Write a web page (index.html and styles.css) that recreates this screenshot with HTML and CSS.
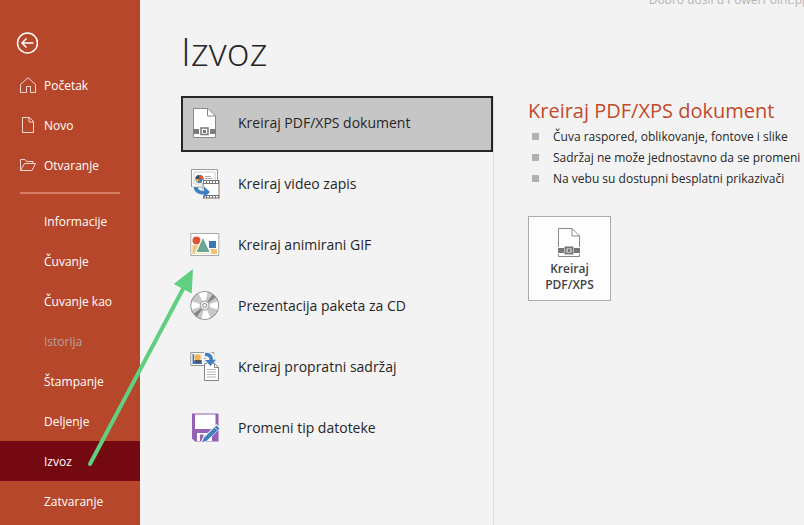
FILE: index.html
```html
<!DOCTYPE html>
<html lang="sr-Latn">
<head>
  <meta charset="UTF-8">
  <meta name="viewport" content="width=device-width, initial-scale=1">
  <title>Izvoz</title>
  <link rel="stylesheet" href="styles.css">
</head>
<body>
  <!-- Leva navigacija -->
  <nav class="sidebar">
    <button type="button" class="back" aria-label="Nazad">
      <svg width="22" height="22" viewBox="0 0 22 22">
        <circle cx="11.500" cy="11" r="10"/>
        <path d="M17.500 11H6M10.500 6.500L6 11l4.500 4.500"/>
      </svg>
    </button>
    <a href="#" class="nav-item">
      <svg class="nav-icon" width="16" height="16" viewBox="0 0 16 16">
        <path d="M.5 7.500L8 .7l7.500 6.800V15.500h-5V9.500h-4v6h-6z"/>
      </svg>
      Početak
    </a>
    <a href="#" class="nav-item">
      <svg class="nav-icon" width="16" height="16" viewBox="0 0 16 16">
        <path d="M2.500.5h7l4 4v11h-11zM9 .5V5h4.500"/>
      </svg>
      Novo
    </a>
    <a href="#" class="nav-item">
      <svg class="nav-icon" width="16" height="16" viewBox="0 0 16 16">
        <path d="M.5 13.500v-11h4.500l1.500 2h6.500v2M.5 13.500L4.500 6.500h11l-3.500 7z"/>
      </svg>
      Otvaranje
    </a>
    <hr class="divider">
    <a href="#" class="nav-item sub">Informacije</a>
    <a href="#" class="nav-item sub">Čuvanje</a>
    <a href="#" class="nav-item sub">Čuvanje kao</a>
    <a href="#" class="nav-item sub disabled" aria-disabled="true">Istorija</a>
    <a href="#" class="nav-item sub">Štampanje</a>
    <a href="#" class="nav-item sub">Deljenje</a>
    <a href="#" class="nav-item sub active" aria-current="page">Izvoz</a>
    <a href="#" class="nav-item sub">Zatvaranje</a>
  </nav>

  <main class="content">
    <div class="file-name">Dobro došli u PowerPoint.pptx</div>
    <h1>Izvoz</h1>

    <div class="columns">
      <!-- Lista opcija za izvoz -->
      <div class="options">
        <button type="button" class="option selected">
          <svg class="option-icon" width="30" height="30" viewBox="0 0 30 30">
            <path d="M3.500.5H18L25.500 8v21.500h-22z" fill="#fff" stroke="#888"/>
            <path d="M17.500.5V8h8" fill="none" stroke="#888"/>
            <path d="M3 21h23v5H3z" fill="#7d7d7d"/>
            <path d="M9 18.500h11v9H9z" fill="#fff"/>
            <path d="M11 20h7v6.500h-7z" fill="#fff" stroke="#777" stroke-width="1.500"/>
            <path d="M13 22h3v3h-3z" fill="#777"/>
          </svg>
          <span class="label">Kreiraj PDF/XPS dokument</span>
        </button>
        <button type="button" class="option">
          <svg class="option-icon" width="30" height="30" viewBox="0 0 30 30">
            <path d="M1.500.5h26V18h-26z" fill="#fff" stroke="#999"/>
            <path d="M4 3h21v12H4z" fill="none" stroke="#ccc"/>
            <circle cx="9.500" cy="10" r="4" fill="#3b7dc0"/>
            <path d="M9.500 10V6a4 4 0 0 0-4 4z" fill="#3d4d60"/>
            <path d="M9.500 10V6a4 4 0 0 1 4 4z" fill="#e2552e"/>
            <path d="M9.500 10H5.500a4 4 0 0 0 2 3.500z" fill="#edad42"/>
            <path d="M15 7.500h6M15 9.500h7" stroke="#aaa"/>
            <path d="M12 11h17.500v18H12z" fill="#fff"/>
            <path d="M13 11.500h16.500M13 14.500h16M13 26.500h16M13 29h16.500M29 11v18" stroke="#777" fill="none"/>
            <path d="M13 13h16M13 27.800h16" stroke="#777" stroke-width="3" stroke-dasharray="1 2"/>
            <path d="M13 14v10" stroke="#777"/>
            <path d="M4 17.500c1 5 5 6.500 11 6" fill="none" stroke="#f3f3f3" stroke-width="6"/>
            <path d="M3.500 18H7.500c1 3 3 4 6.500 4V17.500l6 5.500-6 5.500V25.500c-6 0-9.500-2-10.500-7.500z" fill="#3f80bf"/>
          </svg>
          <span class="label">Kreiraj video zapis</span>
        </button>
        <button type="button" class="option">
          <svg class="option-icon" width="30" height="30" viewBox="0 0 30 30">
            <path d="M.8 3.500h28v22H.8z" fill="#fff" stroke="#aaa"/>
            <path d="M2.500 15h24.500v9H2.500z" fill="#eec477"/>
            <circle cx="6.500" cy="10.500" r="5" fill="#fff"/>
            <circle cx="6.500" cy="10.500" r="4" fill="#dc5535"/>
            <path d="M18 10h9v9h-9z" fill="#fff"/>
            <path d="M19 11h7v7h-7z" fill="#3877b8"/>
            <path d="M13 5.500L22 23.500H4.500z" fill="#fff"/>
            <path d="M13 8l6.500 14h-13z" fill="#6ca795"/>
          </svg>
          <span class="label">Kreiraj animirani GIF</span>
        </button>
        <button type="button" class="option">
          <svg class="option-icon" width="30" height="30" viewBox="0 0 30 30">
            <circle cx="14.700" cy="14.500" r="14" fill="#c8c8c8" stroke="#8b8b8b"/>
            <path d="M14.700 14.500L8.500 2.500a13.500 13.500 0 0 1 9-1.200z" fill="#fff"/>
            <path d="M14.700 14.500L2 10.500a13.500 13.500 0 0 0 0 8z" fill="#fff"/>
            <path d="M14.700 14.500L27.500 10.500a13.500 13.500 0 0 1 0 8z" fill="#fff"/>
            <path d="M14.700 14.500L20.500 26.500a13.500 13.500 0 0 1-9 1.200z" fill="#fff"/>
            <path d="M14.700 14.500L22.500 3.500l3 3z" fill="#858585"/>
            <path d="M14.700 14.500L7 25.500l-3-3z" fill="#858585"/>
            <circle cx="14.700" cy="14.500" r="4.500" fill="#eee" stroke="#999"/>
            <circle cx="14.700" cy="14.500" r="2" fill="#fff" stroke="#888"/>
          </svg>
          <span class="label">Prezentacija paketa za CD</span>
        </button>
        <button type="button" class="option">
          <svg class="option-icon" width="30" height="30" viewBox="0 0 30 30">
            <path d="M.8.5h23v13H.8z" fill="#fff" stroke="#999"/>
            <path d="M2.500 2h9.500v10H2.500z" fill="#3978b8"/>
            <path d="M4 2h8v7H4z" fill="#f4e3c4"/>
            <circle cx="7.500" cy="5.500" r="3" fill="#eeb25b"/>
            <path d="M4 8h8l-4 4z" fill="#555"/>
            <path d="M13.500 4h2M13.500 6.500h3M13.500 9h3" stroke="#aaa"/>
            <path d="M14.500 11.500h10l4 4v13h-14z" fill="#fff" stroke="#858585"/>
            <path d="M24.500 11.500v4h4" fill="none" stroke="#858585"/>
            <path d="M17 17.500h9M17 20h9M17 22.500h9M17 25h9" stroke="#b5b5b5"/>
            <path d="M14 0h5c4 0 6 3 6 7h1.500l-6 8.500L14 8h4c0-3-1-4-4-4z" fill="#f3f3f3"/>
            <path d="M15 .8c5-.8 8 2.500 8 7h3L20.500 14l-5.500-6H19.500c0-2.500-1.500-4-4.500-4z" fill="#3f80bf"/>
          </svg>
          <span class="label">Kreiraj propratni sadržaj</span>
        </button>
        <button type="button" class="option">
          <svg class="option-icon" width="30" height="30" viewBox="0 0 30 30">
            <path d="M2 .5h26.500v28H5l-3-3z" fill="#9561b5"/>
            <path d="M5 1.500h20.500v14.500H5z" fill="#fff"/>
            <path d="M7 20h15v8H7z" fill="#fff"/>
            <path d="M10 21.500h3.500V28H10z" fill="#9561b5"/>
            <path d="M26.500 11l4 4L17 28.500l-7 2.500 2.500-6z" fill="#f3f3f3"/>
            <path d="M26.500 12.500l3 3L17 27.500l-5 1.800 2-4.500z" fill="#3f7fbc"/>
            <path d="M24.500 14.500l3 3" stroke="#c4d9ec"/>
          </svg>
          <span class="label">Promeni tip datoteke</span>
        </button>
      </div>

      <!-- Detalji izabrane opcije -->
      <section class="details">
        <h2>Kreiraj PDF/XPS dokument</h2>
        <ul>
          <li>Čuva raspored, oblikovanje, fontove i slike</li>
          <li>Sadržaj ne može jednostavno da se promeni</li>
          <li>Na vebu su dostupni besplatni prikazivači</li>
        </ul>
        <button type="button" class="tile">
          <svg width="30" height="30" viewBox="0 0 30 30">
            <path d="M3.500.5H17L24.500 8v20.500h-21z" fill="#fff" stroke="#888"/>
            <path d="M17 .5V8h7.500" fill="none" stroke="#888"/>
            <path d="M2 19h24v7H2z" fill="#fdfdfd"/>
            <path d="M3 20h22v5H3z" fill="#777"/>
            <path d="M9 18h10v9H9z" fill="#fff"/>
            <path d="M10.500 19.500h7v6h-7z" fill="#fff" stroke="#777" stroke-width="2"/>
            <path d="M12.500 21h3v3h-3z" fill="#777"/>
          </svg>
          <span>Kreiraj<br>PDF/XPS</span>
        </button>
      </section>
    </div>
  </main>

  <!-- Strelica preko sadržaja -->
  <svg class="arrow" width="804" height="525" viewBox="0 0 804 525" aria-hidden="true">
    <path d="M90 464L183.500 288" stroke="#61cf82" stroke-width="4" stroke-linecap="round"/>
    <path d="M193 269l-1.300 24.500-18-9.500z" fill="#61cf82"/>
  </svg>
</body>
</html>
```
FILE: styles.css
```css
* {
  box-sizing: border-box;
  margin: 0;
  padding: 0;
}

body {
  position: relative;
  display: flex;
  min-height: 100vh;
  overflow: hidden;
  background-color: #f3f3f3;
  color: #262626;
  font-family: "Open Sans", "Noto Sans", sans-serif;
  font-size: 12px;
}

button {
  font: inherit;
  color: inherit;
  cursor: pointer;
}

/* Leva navigacija */
.sidebar {
  flex: 0 0 140px;
  background-color: #b7472a;
}

.back {
  display: block;
  height: 65px;
  padding: 0 16px;
  padding-top: 20px;
  border: none;
  background: none;
}

.back svg {
  display: block;
  fill: none;
  stroke: #fff;
  stroke-width: 1.5;
}

.nav-item {
  display: flex;
  align-items: center;
  gap: 8px;
  height: 40px;
  padding-left: 20px;
  color: #fff;
  text-decoration: none;
}

.nav-item.sub {
  padding-left: 44px;
}

.nav-item:hover {
  background-color: #a33b20;
}

.nav-item.active {
  background-color: #740912;
}

.nav-item.disabled {
  color: #b5a19b;
}

.nav-icon {
  fill: none;
  stroke: #f3d9d2;
}

.divider {
  height: 2px;
  margin: 7px 20px;
  border: none;
  background-color: #d67d66;
}

/* Glavni sadržaj */
.content {
  flex: 1;
  min-width: 0;
  padding-left: 41px;
}

.file-name {
  height: 24px;
  margin-top: -8px;
  margin-right: -16px;
  line-height: 16px;
  text-align: right;
  white-space: nowrap;
  color: #b3b3b3;
}

h1 {
  height: 80px;
  font-size: 39px;
  font-weight: 300;
  line-height: 70px;
}

.columns {
  display: flex;
  min-height: 429px;
}

.options {
  display: flex;
  flex: 0 0 313px;
  flex-direction: column;
  gap: 5px;
  border-right: 1px solid #dcdcdc;
}

.option {
  display: flex;
  align-items: center;
  gap: 18px;
  height: 56px;
  padding: 0 0 2px 7px;
  border: 2px solid transparent;
  background: none;
  font-size: 14px;
  text-align: left;
}

.option.selected {
  border-color: #262626;
  background-color: #c6c6c6;
}

.option-icon {
  overflow: visible;
}

.label {
  padding-bottom: 2px;
}

/* Detalji */
.details {
  flex: 1;
  min-width: 0;
  padding-left: 34px;
}

h2 {
  color: #c04a2c;
  font-size: 20px;
  font-weight: 400;
  line-height: 30px;
  white-space: nowrap;
}

ul {
  list-style: none;
}

li {
  display: flex;
  align-items: center;
  gap: 14px;
  padding-left: 4px;
  line-height: 21px;
  white-space: nowrap;
}

li::before {
  content: "";
  width: 7px;
  height: 7px;
  background-color: #b1b1b1;
}

.tile {
  display: flex;
  flex-direction: column;
  align-items: center;
  gap: 3px;
  width: 83px;
  margin-top: 27px;
  padding: 11px 0 7px;
  border: 1px solid #ababab;
  background-color: #fdfdfd;
  color: #444;
  font-weight: 600;
  line-height: 16px;
}

.arrow {
  position: absolute;
  top: 0;
  left: 0;
  fill: none;
  pointer-events: none;
}
```
